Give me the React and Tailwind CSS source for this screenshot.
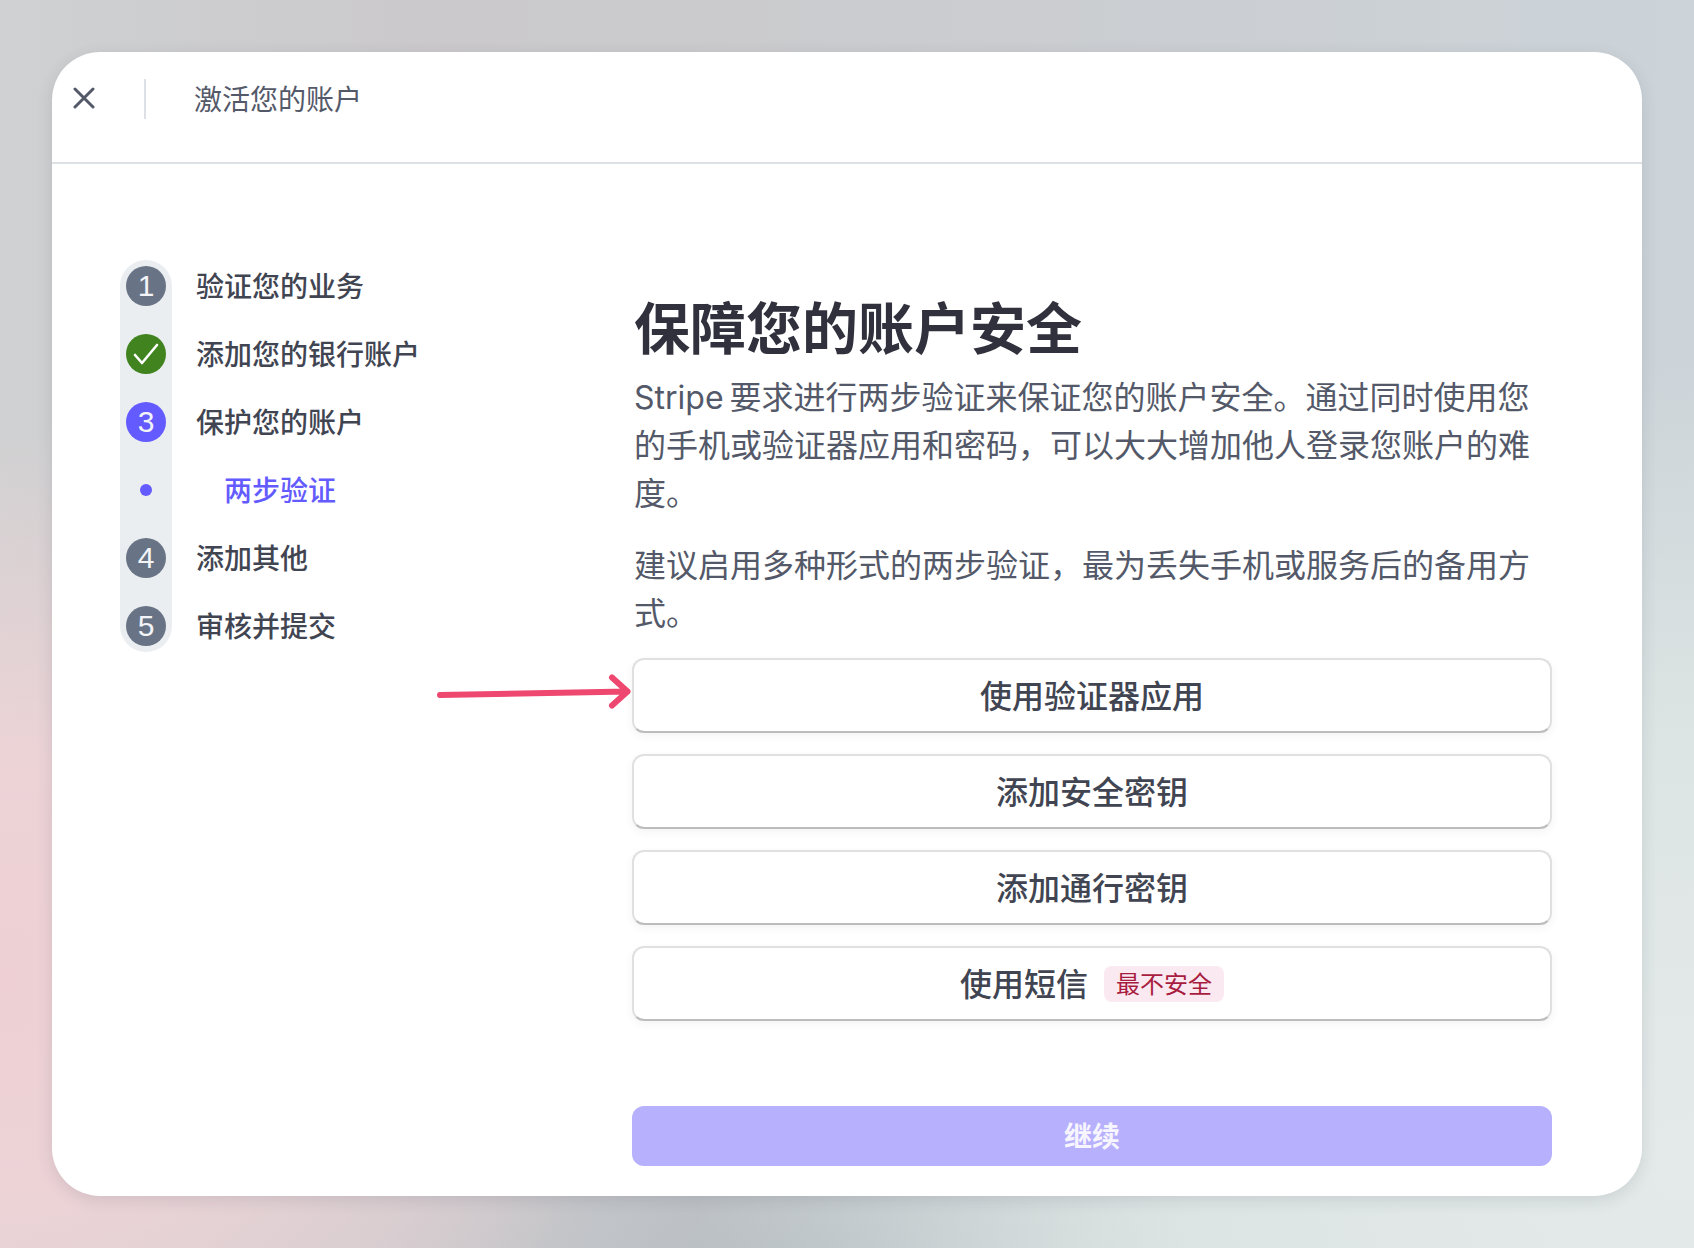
const steps = [
  { label: "验证您的业务", num: "1", color: "bg-[#687385]" },
  { label: "添加您的银行账户", check: true, color: "bg-[#40831f]" },
  { label: "保护您的账户", num: "3", color: "bg-[#635bff]" },
  { label: "两步验证", sub: true },
  { label: "添加其他", num: "4", color: "bg-[#687385]" },
  { label: "审核并提交", num: "5", color: "bg-[#687385]" },
];

const options = ["使用验证器应用", "添加安全密钥", "添加通行密钥"];

const optionClass =
  "flex h-[75px] w-full items-center justify-center rounded-xl border-2 border-[#e0e0e1] border-b-[#bcbcbe] bg-white pt-1 text-[32px] font-medium text-[#414552] shadow-[0_3px_8px_rgba(60,66,87,0.06)]";

function StepMarker({ step }) {
  if (step.sub) {
    return (
      <div className="flex h-10 w-10 items-center justify-center">
        <div className="h-3 w-3 rounded-full bg-[#635bff]" />
      </div>
    );
  }
  return (
    <div className={`flex h-10 w-10 items-center justify-center rounded-full text-[30px] leading-none text-[#f3f4f8] font-['Liberation_Sans',sans-serif] ${step.color}`}>
      {step.check ? (
        <svg width="28" height="24" viewBox="0 0 28 24" fill="none">
          <path d="M3 13l7 8L25 3" stroke="white" strokeWidth="2.6" strokeLinecap="round" strokeLinejoin="round" />
        </svg>
      ) : (
        step.num
      )}
    </div>
  );
}

function Stepper() {
  return (
    <div className="ml-[68px] mt-24 flex w-[500px] shrink-0 flex-col self-start">
      <div className="relative flex flex-col gap-7 py-1.5">
        <div className="absolute bottom-0 left-0 top-0 w-[52px] rounded-full bg-[#ebeef1]" />
        {steps.map((step) => (
          <div key={step.label} className="relative flex h-10 items-center">
            <div className="ml-1.5">
              <StepMarker step={step} />
            </div>
            <span className={step.sub ? "ml-[58px] pt-0.5 text-[28px] font-medium text-[#635bff]" : "ml-[30px] pt-0.5 text-[28px] font-medium text-[#414552]"}>
              {step.label}
            </span>
          </div>
        ))}
      </div>
    </div>
  );
}

export default function App() {
  return (
    <div className="h-[1248px] w-[1694px] overflow-hidden bg-[radial-gradient(ellipse_640px_560px_at_0px_980px,#eed0d4_0%,#ecd3d6_40%,rgba(236,211,214,0)_100%),radial-gradient(ellipse_1000px_800px_at_1694px_1160px,#e4eae9_0%,#dde5e4_50%,rgba(221,229,228,0)_100%),radial-gradient(ellipse_420px_300px_at_830px_1300px,#b2babf_0%,rgba(178,186,191,0)_100%),linear-gradient(90deg,#cfd1d2_0%,#cbc9cc_25%,#cbcdd0_60%,#ccd4d9_100%)] p-[52px] font-['Inter','Noto_Sans_CJK_SC',sans-serif]">
      <div className="relative flex h-[1144px] w-[1590px] flex-col rounded-[48px] bg-white shadow-[0_4px_16px_rgba(60,66,87,0.14)]">
        <header className="flex h-[112px] shrink-0 items-center border-b-2 border-[#dde0e5] pb-[18px]">
          <div className="ml-[21px] flex h-[22px] w-[22px] items-center justify-center">
            <svg width="22" height="22" viewBox="0 0 22 22" fill="none">
              <path d="M2 2l18 18M20 2L2 20" stroke="#545969" strokeWidth="3" strokeLinecap="round" />
            </svg>
          </div>
          <div className="ml-[49px] mt-0.5 h-10 w-0.5 bg-[#dde0e5]" />
          <span className="ml-[48px] pt-1 text-[28px] text-[#545969]">激活您的账户</span>
        </header>

        <div className="flex min-h-0 flex-1">
          <Stepper />
          <main className="ml-3 flex w-[920px] flex-col pt-[133px]">
            <h1 className="pl-0.5 text-[56px] font-bold leading-16 text-[#30313d]">保障您的账户安全</h1>
            <p className="mt-[13px] pl-0.5 text-[32px] leading-12 text-[#545969] [word-spacing:-3px]">
              Stripe 要求进行两步验证来保证您的账户安全。通过同时使用您的手机或验证器应用和密码，可以大大增加他人登录您账户的难度。
            </p>
            <p className="mt-[23.5px] pl-0.5 text-[32px] leading-12 text-[#545969]">
              建议启用多种形式的两步验证，最为丢失手机或服务后的备用方式。
            </p>
            <div className="mt-5 flex flex-col gap-[21px]">
              {options.map((label) => (
                <button key={label} className={optionClass}>{label}</button>
              ))}
              <button className={optionClass}>
                使用短信
                <span className="-mt-0.5 ml-4 flex h-9 items-center rounded-lg bg-[#fbe9f1] px-3 pt-0.5 text-2xl font-normal text-[#a81c3f]">最不安全</span>
              </button>
            </div>
            <button className="mt-[85px] h-[60px] w-full rounded-xl bg-[#b7b0fd] pt-0.5 text-[28px] font-semibold text-[#f7f6ff]">继续</button>
          </main>
        </div>

        <svg className="absolute left-[384px] top-[622px]" width="204" height="40" viewBox="0 0 204 40" fill="none">
          <path d="M4 21l187.5-3.5M176 3.5l15.5 14-15.5 14" stroke="#ef4870" strokeWidth="6" strokeLinecap="round" strokeLinejoin="round" />
        </svg>
      </div>
    </div>
  );
}
